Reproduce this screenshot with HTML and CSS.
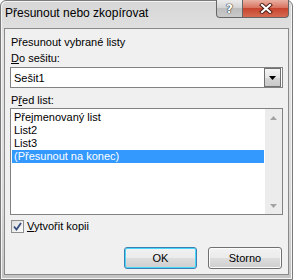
FILE: index.html
```html
<!DOCTYPE html>
<html>
<head>
  <title>Přesunout nebo zkopírovat</title>
  <link rel="stylesheet" href="styles.css">
</head>
<body>
  <div class="window">
    <div class="titlebar">
      <span class="title">Přesunout nebo zkopírovat</span>
      <div class="caption">
        <div class="cap-btn help">?</div>
        <div class="cap-btn close">
          <svg width="14" height="11" viewBox="0 0 14 11">
            <path d="M3 2 L11 9 M11 2 L3 9" stroke="#4a1a12" stroke-width="4" stroke-linecap="square"/>
            <path d="M3 2 L11 9 M11 2 L3 9" stroke="#fff" stroke-width="2.2" stroke-linecap="square"/>
          </svg>
        </div>
      </div>
    </div>
    <div class="client">
      <div class="label">Přesunout vybrané listy</div>
      <div class="label"><u>D</u>o sešitu:</div>
      <div class="combo">
        <span class="combo-text">Sešit1</span>
        <div class="combo-btn">
          <svg width="7" height="4" viewBox="0 0 7 4"><path d="M0 0 H7 L3.5 4 Z" fill="#000"/></svg>
        </div>
      </div>
      <div class="label label-list">P<u>ř</u>ed list:</div>
      <div class="listbox">
        <ul class="items">
          <li>Přejmenovaný list</li>
          <li>List2</li>
          <li>List3</li>
          <li class="selected">(Přesunout na konec)</li>
        </ul>
        <div class="scrollbar">
          <div class="arrow">
            <svg width="7" height="4" viewBox="0 0 7 4"><path d="M0 4 H7 L3.5 0 Z" fill="#a3a3a3"/></svg>
          </div>
          <div class="arrow">
            <svg width="7" height="4" viewBox="0 0 7 4"><path d="M0 0 H7 L3.5 4 Z" fill="#a3a3a3"/></svg>
          </div>
        </div>
      </div>
      <div class="check">
        <div class="box">
          <svg width="11" height="11" viewBox="0 0 11 11"><path d="M2 5.5 L4.5 8.5 L9 2" fill="none" stroke="#334a7a" stroke-width="1.8"/></svg>
        </div>
        <span><u>V</u>ytvořit kopii</span>
      </div>
      <div class="buttons">
        <button class="btn default">OK</button>
        <button class="btn">Storno</button>
      </div>
    </div>
  </div>
</body>
</html>
```

FILE: styles.css
```css
html, body {
  margin: 0;
  height: 100%;
  background-color: #fff;
}
.window {
  width: 293px;
  height: 280px;
  box-sizing: border-box;
  border: 1px solid #7a7a7a;
  border-radius: 6px 6px 0 0;
  background: linear-gradient(#d6d6d6, #e4e4e4 40px, #dadada 200px, #c4c4c4);
  box-shadow: inset 1px 1px 0 #f4f4f4, inset -1px -1px 0 #f4f4f4;
  display: flex;
  flex-direction: column;
  font-family: "Liberation Sans", Arial, sans-serif;
  font-size: 11px;
  color: #000;
}
.titlebar {
  height: 27px;
  display: flex;
  align-items: flex-start;
  padding-left: 4px;
}
.title {
  font-size: 12px;
  line-height: 16px;
  margin-top: 4px;
}
.caption {
  margin-left: auto;
  margin-right: 3px;
  margin-top: -1px;
  display: flex;
}
.cap-btn {
  height: 18px;
  box-sizing: border-box;
  border: 1px solid #666;
  border-top: 0;
  display: flex;
  align-items: center;
  justify-content: center;
}
.help {
  width: 27px;
  border-radius: 0 0 0 4px;
  background: linear-gradient(#ececec, #d4d4d4 45%, #bdbdbd 50%, #c9c9c9);
  color: #fff;
  font-family: "DejaVu Sans", sans-serif;
  font-weight: bold;
  font-size: 12px;
  text-shadow: 0 0 1px #333, 0 0 1px #333, 0 0 1px #333;
}
.close {
  width: 46px;
  border-left: 0;
  border-radius: 0 0 4px 0;
  background: linear-gradient(#eab1a3, #d9735f 45%, #c7452e 50%, #d66a52);
}
.client {
  flex: 1;
  margin: 0 3px 4px 3px;
  border: 1px solid #8a8a8a;
  background-color: #f0f0f0;
  padding: 5px 5px 0 5px;
  display: flex;
  flex-direction: column;
}
.label {
  line-height: 16px;
  padding-left: 1px;
}
.label-list {
  margin-top: 4px;
}
.combo {
  margin-top: 1px;
  height: 21px;
  box-sizing: border-box;
  border: 1px solid #828282;
  background-color: #fff;
  display: flex;
  align-items: center;
}
.combo-text {
  padding-left: 3px;
}
.combo-btn {
  margin-left: auto;
  margin-right: 1px;
  width: 17px;
  height: 19px;
  box-sizing: border-box;
  border: 1px solid #707070;
  background: linear-gradient(#f4f4f4, #e6e6e6 50%, #d6d6d6 50%, #cacaca);
  display: flex;
  align-items: center;
  justify-content: center;
}
.listbox {
  height: 107px;
  box-sizing: border-box;
  border: 1px solid #828282;
  background-color: #fff;
  display: flex;
}
.items {
  flex: 1;
  list-style: none;
  margin: 0;
  padding: 2px 1px 0 1px;
}
.items li {
  height: 13px;
  line-height: 13px;
  padding-left: 2px;
  white-space: nowrap;
}
.items li.selected {
  background-color: #3399ff;
  color: #fff;
}
.scrollbar {
  width: 17px;
  background-color: #ececec;
  display: flex;
  flex-direction: column;
  justify-content: space-between;
}
.arrow {
  height: 17px;
  display: flex;
  align-items: center;
  justify-content: center;
}
.check {
  margin-top: 4px;
  height: 14px;
  display: flex;
  align-items: center;
  gap: 3px;
}
.box {
  margin-left: 1px;
  width: 13px;
  height: 13px;
  box-sizing: border-box;
  border: 1px solid #8e8f8f;
  background: linear-gradient(135deg, #dcdcdc, #fdfdfd);
  display: flex;
  align-items: center;
  justify-content: center;
}
.buttons {
  margin-top: auto;
  margin-bottom: 5px;
  margin-right: 1px;
  display: flex;
  justify-content: flex-end;
  gap: 11px;
}
.btn {
  width: 74px;
  height: 22px;
  box-sizing: border-box;
  border: 1px solid #707070;
  border-radius: 3px;
  background: linear-gradient(#f2f2f2, #ebebeb 50%, #dddddd 50%, #cfcfcf);
  box-shadow: inset 0 0 0 1px #fcfcfc;
  font-family: "Liberation Sans", Arial, sans-serif;
  font-size: 11px;
  color: #000;
  padding: 0;
}
.btn.default {
  width: 73px;
  border-color: #3c7fb1;
  box-shadow: inset 0 0 0 1px #48d8fb;
}
```
